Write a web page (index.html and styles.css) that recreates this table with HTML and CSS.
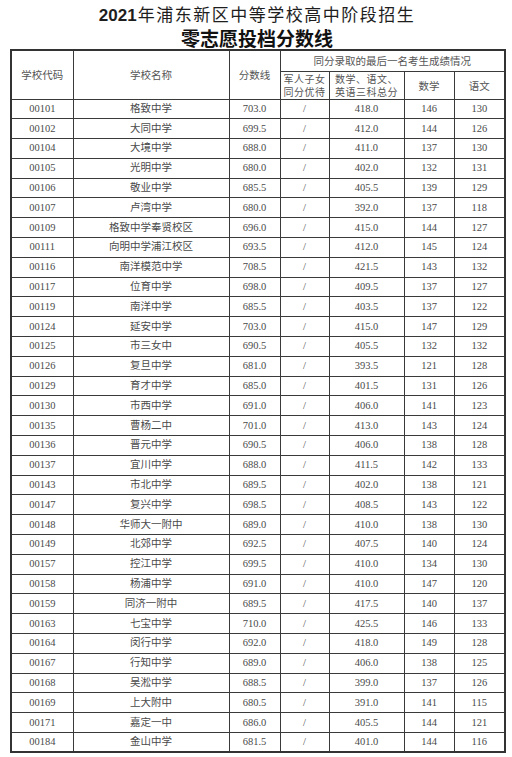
FILE: index.html
```html
<!DOCTYPE html>
<html lang="zh-CN">
<head>
<meta charset="utf-8">
<title>零志愿投档分数线</title>
<link rel="stylesheet" href="styles.css">
</head>
<body>
<div class="page">
  <header class="title">
    <div class="title-1"><span class="year">2021</span>年浦东新区中等学校高中阶段招生</div>
    <div class="title-2">零志愿投档分数线</div>
  </header>
  <table class="scores">
    <colgroup>
      <col class="c-code"><col class="c-name"><col class="c-line"><col class="c-mil"><col class="c-sum"><col class="c-math"><col class="c-chn">
    </colgroup>
    <thead>
      <tr class="h1">
        <th rowspan="2">学校代码</th>
        <th rowspan="2">学校名称</th>
        <th rowspan="2">分数线</th>
        <th colspan="4">同分录取的最后一名考生成绩情况</th>
      </tr>
      <tr class="h2">
        <th class="two">军人子女<br>同分优待</th>
        <th class="two">数学、语文、<br>英语三科总分</th>
        <th>数学</th>
        <th>语文</th>
      </tr>
    </thead>
    <tbody>
      <tr><td>00101</td><td>格致中学</td><td>703.0</td><td>/</td><td>418.0</td><td>146</td><td>130</td></tr>
      <tr><td>00102</td><td>大同中学</td><td>699.5</td><td>/</td><td>412.0</td><td>144</td><td>126</td></tr>
      <tr><td>00104</td><td>大境中学</td><td>688.0</td><td>/</td><td>411.0</td><td>137</td><td>130</td></tr>
      <tr><td>00105</td><td>光明中学</td><td>680.0</td><td>/</td><td>402.0</td><td>132</td><td>131</td></tr>
      <tr><td>00106</td><td>敬业中学</td><td>685.5</td><td>/</td><td>405.5</td><td>139</td><td>129</td></tr>
      <tr><td>00107</td><td>卢湾中学</td><td>680.0</td><td>/</td><td>392.0</td><td>137</td><td>118</td></tr>
      <tr><td>00109</td><td>格致中学奉贤校区</td><td>696.0</td><td>/</td><td>415.0</td><td>144</td><td>127</td></tr>
      <tr><td>00111</td><td>向明中学浦江校区</td><td>693.5</td><td>/</td><td>412.0</td><td>145</td><td>124</td></tr>
      <tr><td>00116</td><td>南洋模范中学</td><td>708.5</td><td>/</td><td>421.5</td><td>143</td><td>132</td></tr>
      <tr><td>00117</td><td>位育中学</td><td>698.0</td><td>/</td><td>409.5</td><td>137</td><td>127</td></tr>
      <tr><td>00119</td><td>南洋中学</td><td>685.5</td><td>/</td><td>403.5</td><td>137</td><td>122</td></tr>
      <tr><td>00124</td><td>延安中学</td><td>703.0</td><td>/</td><td>415.0</td><td>147</td><td>129</td></tr>
      <tr><td>00125</td><td>市三女中</td><td>690.5</td><td>/</td><td>405.5</td><td>132</td><td>132</td></tr>
      <tr><td>00126</td><td>复旦中学</td><td>681.0</td><td>/</td><td>393.5</td><td>121</td><td>128</td></tr>
      <tr><td>00129</td><td>育才中学</td><td>685.0</td><td>/</td><td>401.5</td><td>131</td><td>126</td></tr>
      <tr><td>00130</td><td>市西中学</td><td>691.0</td><td>/</td><td>406.0</td><td>141</td><td>123</td></tr>
      <tr><td>00135</td><td>曹杨二中</td><td>701.0</td><td>/</td><td>413.0</td><td>143</td><td>124</td></tr>
      <tr><td>00136</td><td>晋元中学</td><td>690.5</td><td>/</td><td>406.0</td><td>138</td><td>128</td></tr>
      <tr><td>00137</td><td>宜川中学</td><td>688.0</td><td>/</td><td>411.5</td><td>142</td><td>133</td></tr>
      <tr><td>00143</td><td>市北中学</td><td>689.5</td><td>/</td><td>402.0</td><td>138</td><td>121</td></tr>
      <tr><td>00147</td><td>复兴中学</td><td>698.5</td><td>/</td><td>408.5</td><td>143</td><td>122</td></tr>
      <tr><td>00148</td><td>华师大一附中</td><td>689.0</td><td>/</td><td>410.0</td><td>138</td><td>130</td></tr>
      <tr><td>00149</td><td>北郊中学</td><td>692.5</td><td>/</td><td>407.5</td><td>140</td><td>124</td></tr>
      <tr><td>00157</td><td>控江中学</td><td>699.5</td><td>/</td><td>410.0</td><td>134</td><td>130</td></tr>
      <tr><td>00158</td><td>杨浦中学</td><td>691.0</td><td>/</td><td>410.0</td><td>147</td><td>120</td></tr>
      <tr><td>00159</td><td>同济一附中</td><td>689.5</td><td>/</td><td>417.5</td><td>140</td><td>137</td></tr>
      <tr><td>00163</td><td>七宝中学</td><td>710.0</td><td>/</td><td>425.5</td><td>146</td><td>133</td></tr>
      <tr><td>00164</td><td>闵行中学</td><td>692.0</td><td>/</td><td>418.0</td><td>149</td><td>128</td></tr>
      <tr><td>00167</td><td>行知中学</td><td>689.0</td><td>/</td><td>406.0</td><td>138</td><td>125</td></tr>
      <tr><td>00168</td><td>吴淞中学</td><td>688.5</td><td>/</td><td>399.0</td><td>137</td><td>126</td></tr>
      <tr><td>00169</td><td>上大附中</td><td>680.5</td><td>/</td><td>391.0</td><td>141</td><td>115</td></tr>
      <tr><td>00171</td><td>嘉定一中</td><td>686.0</td><td>/</td><td>405.5</td><td>144</td><td>121</td></tr>
      <tr><td>00184</td><td>金山中学</td><td>681.5</td><td>/</td><td>401.0</td><td>144</td><td>116</td></tr>
    </tbody>
  </table>
</div>
</body>
</html>
```
FILE: styles.css
```css
html, body {
  margin: 0;
  padding: 0;
  background: #ffffff;
}

.page {
  width: 512px;
  padding: 4px 0 0 10px;
  box-sizing: border-box;
  font-family: "Liberation Serif", "Noto Sans CJK SC", serif;
  color: #4a4a4a;
}

.title {
  width: 494px;
  text-align: center;
  color: #1e1e1e;
}

.title-1 {
  height: 20px;
  font-family: "Noto Sans CJK SC", sans-serif;
  font-size: 17px;
  line-height: 20px;
  letter-spacing: 1.5px;
  font-weight: 400;
}

.title-1 .year {
  font-family: "Liberation Sans", sans-serif;
  font-weight: 700;
  letter-spacing: 0;
  margin-right: 1px;
}

.title-2 {
  height: 20px;
  margin-top: 4px;
  font-family: "Noto Sans CJK SC", sans-serif;
  font-size: 19px;
  line-height: 20px;
  font-weight: 700;
  color: #111;
}

.scores {
  width: 494px;
  margin-top: 1px;
  table-layout: fixed;
  border-collapse: collapse;
  border: 2px solid #333;
  font-size: 10.5px;
}

.c-code { width: 62px; }
.c-name { width: 156px; }
.c-line { width: 51px; }
.c-mil { width: 49px; }
.c-sum { width: 75px; }
.c-math { width: 50px; }
.c-chn { width: 51px; }

.scores th,
.scores td {
  border: 1px solid #3a3a3a;
  padding: 0;
  text-align: center;
  vertical-align: middle;
  font-weight: normal;
  white-space: nowrap;
}

.scores th {
  font-family: "Noto Sans CJK SC", sans-serif;
  color: #555;
  font-size: 10.5px;
  line-height: 13px;
}

.scores .h1 { height: 21px; }
.scores .h2 { height: 27px; }

.scores th.two {
  font-size: 10px;
  line-height: 13.5px;
  letter-spacing: 0.5px;
}

.scores tbody tr {
  height: 19.8px;
}

.scores td {
  line-height: 12px;
  color: #4a4a4a;
}
```
